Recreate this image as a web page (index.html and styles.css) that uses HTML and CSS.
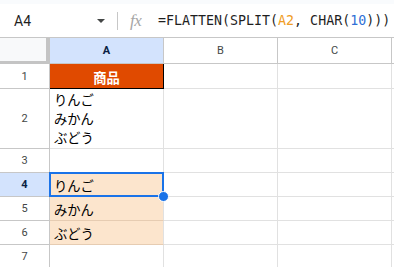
FILE: index.html
```html
<!DOCTYPE html>
<html lang="ja">
<head>
<meta charset="utf-8">
<link rel="stylesheet" href="styles.css">
</head>
<body>
<div class="app">
  <div class="topstrip"></div>
  <div class="fbar">
    <div class="namebox"><span class="ref">A4</span><span class="caret"></span></div>
    <div class="divider"></div>
    <span class="fx">fx</span>
    <div class="formula">=FLATTEN(SPLIT(<span class="f-ref">A2</span>, CHAR(<span class="f-num">10</span>)))</div>
  </div>
  <div class="grid">
    <div class="corner"></div>
    <div class="colhead sel">A</div>
    <div class="colhead">B</div>
    <div class="colhead">C</div>
    <div class="colhead rest"></div>

    <div class="rowhead">1</div>
    <div class="cell title">商品</div>
    <div class="cell"></div><div class="cell"></div><div class="cell rest"></div>

    <div class="rowhead">2</div>
    <div class="cell multi">りんご<br>みかん<br>ぶどう</div>
    <div class="cell"></div><div class="cell"></div><div class="cell rest"></div>

    <div class="rowhead">3</div>
    <div class="cell"></div><div class="cell"></div><div class="cell"></div><div class="cell rest"></div>

    <div class="rowhead sel">4</div>
    <div class="cell peach active">りんご<span class="selbox"></span><span class="handle"></span></div>
    <div class="cell"></div><div class="cell"></div><div class="cell rest"></div>

    <div class="rowhead">5</div>
    <div class="cell peach">みかん</div>
    <div class="cell"></div><div class="cell"></div><div class="cell rest"></div>

    <div class="rowhead">6</div>
    <div class="cell peach">ぶどう</div>
    <div class="cell"></div><div class="cell"></div><div class="cell rest"></div>

    <div class="rowhead">7</div>
    <div class="cell"></div><div class="cell"></div><div class="cell"></div><div class="cell rest"></div>
  </div>
</div>
</body>
</html>
```

FILE: styles.css
```css
* { box-sizing: border-box; }
html, body { margin: 0; padding: 0; background: #fff; }
body { font-family: Roboto, "Noto Sans CJK JP", sans-serif; color: #1f1f1f; overflow: hidden; }
.app { width: 394px; height: 267px; overflow: hidden; }

.topstrip { height: 4px; background: #f9fbfd; }

.fbar {
  height: 34px;
  display: flex;
  align-items: center;
  border-bottom: 1px solid #c7c7c7;
  background: #fff;
}
.namebox {
  width: 117px;
  display: flex;
  align-items: center;
  padding-left: 14px;
  padding-right: 12px;
}
.ref { font-size: 14px; color: #1f1f1f; flex: 1; }
.caret {
  width: 0; height: 0;
  border-left: 4px solid transparent;
  border-right: 4px solid transparent;
  border-top: 4px solid #444746;
}
.divider { width: 1px; height: 18px; background: #c7c7c7; }
.fx {
  font-family: "Liberation Serif", serif;
  font-style: italic;
  font-size: 17px;
  color: #a6a6a6;
  margin-left: 12px;
  width: 28px;
  letter-spacing: -0.5px;
}
.formula {
  font-family: "DejaVu Sans Mono", "Liberation Mono", monospace;
  font-size: 13.3px;
  color: #1f1f1f;
  white-space: nowrap;
}
.f-ref { color: #f09d24; }
.f-num { color: #2f6fd6; }

.grid {
  display: grid;
  grid-template-columns: 50px 114px 114px 114px 1fr;
  grid-template-rows: 26px 25px 60px 24px 24px 24px 24px 24px;
}
.corner {
  background: #f8f9fa;
  border-right: 4px solid #c4c4c4;
  border-bottom: 3px solid #c4c4c4;
}
.colhead {
  display: flex;
  align-items: center;
  justify-content: center;
  font-size: 11px;
  color: #444746;
  background: #fff;
  border-right: 1px solid #c7c7c7;
  border-bottom: 1px solid #c7c7c7;
}
.colhead.sel { background: #d3e3fd; color: #0b1f44; font-weight: 700; }
.colhead.rest { border-right: none; }

.rowhead {
  display: flex;
  align-items: center;
  justify-content: center;
  font-size: 11px;
  color: #444746;
  background: #fff;
  border-right: 1px solid #c7c7c7;
  border-bottom: 1px solid #c7c7c7;
}
.rowhead.sel { background: #d3e3fd; color: #0b1f44; font-weight: 700; }

.cell {
  position: relative;
  border-right: 1px solid #e1e1e1;
  border-bottom: 1px solid #e1e1e1;
  font-family: "Noto Sans CJK JP", sans-serif;
  font-size: 13.3px;
  color: #000;
  padding: 0 4px;
  display: flex;
  align-items: flex-end;
  line-height: 17px;
  padding-bottom: 2px;
}
.cell.rest { border-right: none; }
.cell.title {
  background: #e04a00;
  color: #fff;
  font-weight: 700;
  justify-content: center;
  border-right-color: #000;
  border-bottom-color: #000;
}
.cell.multi { display: block; padding-top: 1px; padding-bottom: 0; line-height: 19px; }
.cell.peach { background: #fce5cd; border-bottom-color: #e6ccb2; }
.selbox {
  position: absolute;
  left: -1px; top: -1px; right: -1px; bottom: -1px;
  border: 2px solid #1a73e8;
  pointer-events: none;
}
.handle {
  position: absolute;
  right: -6px; bottom: -6px;
  width: 11px; height: 11px;
  border-radius: 50%;
  background: #1a73e8;
  border: 1px solid #fff;
  z-index: 2;
}
```
